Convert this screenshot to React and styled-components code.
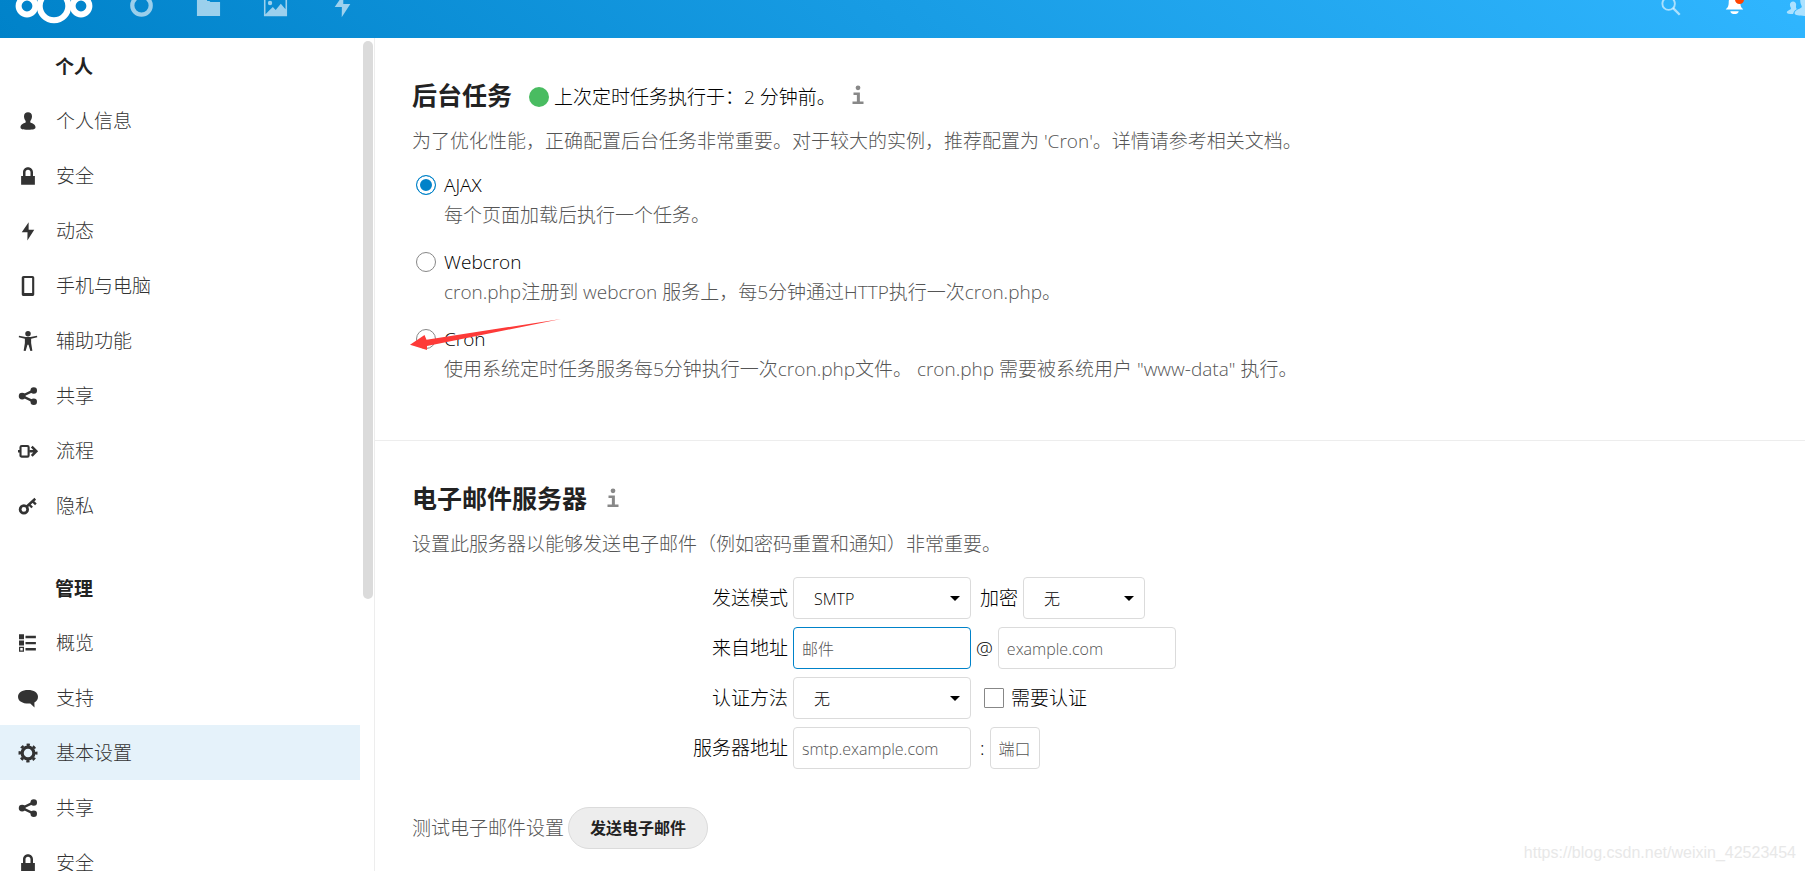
import React from 'react';
import styled, { createGlobalStyle } from 'styled-components';

// icons, all drawn on a 16px grid
const icons = {
  user: (
    <path d="M8 1c-1.9 0-3.2 1.300-3.200 3.200 0 1.600.5 2.600 1.200 3.500.300.500.200 1.400-.200 1.700C4.300 10 2 10.600 2 13c0 1.400 1.500 2 6 2s6-.600 6-2c0-2.400-2.300-3-3.800-3.600-.400-.300-.500-1.200-.200-1.700.700-.900 1.200-1.900 1.200-3.500C11.200 2.300 9.900 1 8 1z" />
  ),
  lock: (
    <path d="M8 1C5.700 1 4 2.700 4 5v3H2.500v7h11V8H12V5c0-2.300-1.700-4-4-4zm0 2c1.200 0 2 .900 2 2v3H6V5c0-1.100.800-2 2-2z" />
  ),
  bolt: <path d="M8.500 1 3 9h4.600l-.100 6.500L13 7H8.500z" />,
  phone: (
    <path
      fillRule="evenodd"
      d="M4.500 0h7C12.400 0 13 .600 13 1.500v13c0 .900-.600 1.500-1.500 1.500h-7C3.600 16 3 15.400 3 14.500v-13C3 .600 3.600 0 4.500 0zM5 1.600v12h6.300v-12z"
    />
  ),
  access: (
    <>
      <circle cx="8" cy="2.200" r="2.200" />
      <path d="M.800 3.800 6 4.800h4l5.200-1 .200 1.100-4.900 1.300V9.500l1 6.300-1.600.200-1.500-5h-.800l-1.500 5-1.600-.200 1-6.300V6.200L.600 4.900z" />
    </>
  ),
  share: (
    <>
      <circle cx="3.300" cy="8" r="2.700" />
      <circle cx="12.600" cy="3.500" r="2.600" />
      <circle cx="12.600" cy="12.500" r="2.600" />
      <path d="M12.600 3.500 3.300 8l9.300 4.500" fill="none" stroke="currentColor" strokeWidth="1.900" />
    </>
  ),
  flow: (
    <>
      <rect x="2" y="4" width="6.500" height="8.500" rx="1" fill="none" stroke="currentColor" strokeWidth="1.700" />
      <path d="M0 8.200h2M9 8.200h5M11 4.500l3.700 3.700-3.700 3.700" fill="none" stroke="currentColor" strokeWidth="2" />
    </>
  ),
  key: (
    <>
      <circle cx="4.700" cy="10.700" r="3" fill="none" stroke="currentColor" strokeWidth="2.200" />
      <path d="M6.800 8.600 13.800 2.200M9.300 7.200l2 2M12 4.500l2.300 2.200" fill="none" stroke="currentColor" strokeWidth="1.900" />
    </>
  ),
  list: (
    <>
      <path d="M.800 1h4v4h-4zM.800 6h4v4h-4zM6 2.200h8.300v1.900H6zM6 7.100h8.300V9H6zM6 12h8.300v1.900H6z" />
      <rect x="1.300" y="11.500" width="3" height="3" fill="none" stroke="currentColor" />
    </>
  ),
  comment: (
    <path d="M8 1.500c4.600 0 8 2 8 5.500 0 2.300-1.200 3.700-2.900 4.600L13.200 15.500 9.800 12.400C4.500 12.800 0 11 0 7c0-3.500 3.400-5.500 8-5.500z" />
  ),
  gear: (
    <>
      <circle cx="8" cy="8" r="4.700" fill="none" stroke="currentColor" strokeWidth="2.600" />
      <circle cx="8" cy="8" r="6.600" fill="none" stroke="currentColor" strokeWidth="2" strokeDasharray="2.600 2.580" strokeDashoffset="1.300" />
    </>
  ),
  ring: <circle cx="8" cy="8" r="5.900" fill="none" stroke="currentColor" strokeWidth="2.700" />,
  folder: <path d="M.600 1.500h6.500v3.600h1.500l.600.600h6.200v9H.600z" />,
  picture: (
    <path
      fillRule="evenodd"
      d="M.600 1h14.800v13.800H.600zM1.600 2v11.600l3-3 1.700-1.600 1.800 1.800 3.300-4 3 3.600V2zM4.500 5a1.400 1.400 0 1 1 0 2.800 1.400 1.400 0 0 1 0-2.800z"
    />
  ),
  search: (
    <>
      <circle cx="6.800" cy="6.800" r="4" fill="none" stroke="currentColor" strokeWidth="1.200" />
      <path d="m9.700 9.700 4.200 4.200" fill="none" stroke="currentColor" strokeWidth="1.500" />
    </>
  ),
  bell: (
    <>
      <path d="M8 1.500c-2.500 0-3.700 2-3.700 4.300 0 2.500-.500 3.400-1.900 4.700h11.200c-1.400-1.300-1.900-2.200-1.900-4.700C11.700 3.500 10.500 1.500 8 1.500z" />
      <path d="M5.300 11.600h5.400C10.400 13 9.300 13.500 8 13.500s-2.400-.500-2.700-1.900z" />
    </>
  ),
  contacts: (
    <>
      <path d="M12 2c-1.700 0-2.900 1.200-2.900 2.900 0 2.200 1 2.800 1 3.900S5.500 10.700 5.500 13c0 1.200 3 1.700 6.500 1.700s6.500-.500 6.500-1.700c0-2.300-4.600-3.100-4.600-4.200s1-1.700 1-3.900C14.900 3.200 13.700 2 12 2z" />
      <path d="M4.500 5.500c-1.200 0-2 .900-2 2 0 1.300.700 1.700.700 2.500 0 .600-2.700 1.200-2.700 2.400 0 .700 1.500 1 4 1 .500-2 1.800-2.700 2.500-3.200-.700-.300-.700-1.300-.500-2.700 0-1.100-.800-2-2-2z" />
    </>
  ),
  info: (
    <>
      <circle cx="8" cy="2.200" r="1.900" />
      <path d="M4.400 5.900h5.100v7.200h2.900v2H3.600v-2h3.500V7.900H4.400z" />
    </>
  ),
};

const Icon = ({ name, size = 20 }) => (
  <svg width={size} height={size} viewBox="0 0 16 16" fill="currentColor" overflow="visible" aria-hidden="true">
    {icons[name]}
  </svg>
);

const personal = [
  { icon: 'user', label: '个人信息' },
  { icon: 'lock', label: '安全' },
  { icon: 'bolt', label: '动态' },
  { icon: 'phone', label: '手机与电脑' },
  { icon: 'access', label: '辅助功能' },
  { icon: 'share', label: '共享' },
  { icon: 'flow', label: '流程' },
  { icon: 'key', label: '隐私' },
];

const admin = [
  { icon: 'list', label: '概览' },
  { icon: 'comment', label: '支持' },
  { icon: 'gear', label: '基本设置', active: true },
  { icon: 'share', label: '共享' },
  { icon: 'lock', label: '安全' },
];

const modes = [
  { id: 'ajax', label: 'AJAX', text: '每个页面加载后执行一个任务。' },
  {
    id: 'webcron',
    label: 'Webcron',
    text: 'cron.php注册到 webcron 服务上，每5分钟通过HTTP执行一次cron.php。',
  },
  {
    id: 'cron',
    label: 'Cron',
    text: '使用系统定时任务服务每5分钟执行一次cron.php文件。 cron.php 需要被系统用户 "www-data" 执行。',
    marked: true,
  },
];

const NavGroup = ({ title, items }) => (
  <Group>
    <GroupTitle>{title}</GroupTitle>
    <ul>
      {items.map(({ icon, label, active }) => (
        <li key={label}>
          <NavLink href="#" $active={active}>
            <Icon name={icon} />
            <span>{label}</span>
          </NavLink>
        </li>
      ))}
    </ul>
  </Group>
);

const App = () => {
  return (
    <Page>
      <GlobalStyle />
      {/* header */}
      <Header>
        <Logo href="#" aria-label="Nextcloud">
          <svg width="78" height="36" viewBox="0 0 78 36" fill="none" stroke="#fff" strokeWidth="6">
            <circle cx="12" cy="18" r="8.400" />
            <circle cx="39" cy="18" r="14.300" />
            <circle cx="66" cy="18" r="8.400" />
          </svg>
        </Logo>
        <AppMenu>
          {['ring', 'folder', 'picture', 'bolt'].map((name) => (
            <HeaderLink key={name} href="#" aria-label={name}>
              <Icon name={name} size={25} />
            </HeaderLink>
          ))}
        </AppMenu>
        <UserMenu>
          <HeaderLink href="#" aria-label="search">
            <Icon name="search" size={25} />
          </HeaderLink>
          <HeaderLink href="#" aria-label="notifications" $bright>
            <Icon name="bell" size={25} />
            <Unread />
          </HeaderLink>
          <HeaderLink href="#" aria-label="contacts">
            <Icon name="contacts" size={25} />
          </HeaderLink>
        </UserMenu>
      </Header>

      <Body>
        {/* sidebar */}
        <Sidebar>
          <nav>
            <NavGroup title="个人" items={personal} />
            <NavGroup title="管理" items={admin} />
          </nav>
          <Scrollbar />
        </Sidebar>

        <Content>
          {/* background jobs */}
          <Section>
            <Heading>
              <h2>后台任务</h2>
              <Status>
                <Dot />
                上次定时任务执行于：2 分钟前。
              </Status>
              <InfoLink href="#" aria-label="info">
                <Icon name="info" />
              </InfoLink>
            </Heading>
            <Hint>
              为了优化性能，正确配置后台任务非常重要。对于较大的实例，推荐配置为 'Cron'。详情请参考相关文档。
            </Hint>
            <Options>
              {modes.map(({ id, label, text, marked }) => (
                <Option key={id}>
                  <input type="radio" name="mode" id={id} defaultChecked={id === 'ajax'} />
                  <label htmlFor={id}>{label}</label>
                  <p>{text}</p>
                  {marked && (
                    <Arrow width="151" height="31" viewBox="0 0 151 31" aria-hidden="true">
                      <path d="M0 25.700 14.500 16l2 4.700L151 0 17 27l0 4z" fill="#fd3a38" />
                    </Arrow>
                  )}
                </Option>
              ))}
            </Options>
          </Section>

          {/* mail server */}
          <Section>
            <Heading>
              <h2>电子邮件服务器</h2>
              <InfoLink href="#" aria-label="info">
                <Icon name="info" />
              </InfoLink>
            </Heading>
            <Hint>设置此服务器以能够发送电子邮件（例如密码重置和通知）非常重要。</Hint>
            <Form onSubmit={(e) => e.preventDefault()}>
              <Row>
                <RowLabel htmlFor="smtpmode">发送模式</RowLabel>
                <Select id="smtpmode" defaultValue="smtp">
                  <option value="smtp">SMTP</option>
                </Select>
                <Extra>
                  <label htmlFor="secure">加密</label>
                  <Select id="secure" $width={122}>
                    <option>无</option>
                  </Select>
                </Extra>
              </Row>
              <Row>
                <RowLabel htmlFor="from">来自地址</RowLabel>
                <TextInput id="from" type="text" placeholder="邮件" $active />
                <label htmlFor="domain">@</label>
                <TextInput id="domain" type="text" placeholder="example.com" />
              </Row>
              <Row>
                <RowLabel htmlFor="authtype">认证方法</RowLabel>
                <Select id="authtype">
                  <option>无</option>
                </Select>
                <Extra>
                  <Checkbox id="auth" type="checkbox" />
                  <label htmlFor="auth">需要认证</label>
                </Extra>
              </Row>
              <Row>
                <RowLabel htmlFor="host">服务器地址</RowLabel>
                <TextInput id="host" type="text" placeholder="smtp.example.com" />
                <Extra>
                  <label htmlFor="port">:</label>
                  <TextInput id="port" type="text" placeholder="端口" $width={50} />
                </Extra>
              </Row>
            </Form>
            <TestRow>
              <span>测试电子邮件设置</span>
              <Button type="button">发送电子邮件</Button>
            </TestRow>
          </Section>
        </Content>
      </Body>
      <Watermark>https://blog.csdn.net/weixin_42523454</Watermark>
    </Page>
  );
};

const GlobalStyle = createGlobalStyle`
  * {
    box-sizing: border-box;
    margin: 0;
    padding: 0;
  }
  body {
    background: #fff;
    color: #000;
    font-family: 'Open Sans', 'Noto Sans CJK SC', sans-serif;
    font-size: 19px;
    font-weight: 300;
    line-height: 30px;
  }
  ul {
    list-style: none;
  }
  a {
    color: inherit;
    text-decoration: none;
  }
  svg {
    display: block;
    flex-shrink: 0;
  }
`;

const Page = styled.div`
  position: relative;
  display: flex;
  flex-direction: column;
  height: 100vh;
  overflow: hidden;
`;

const Header = styled.header`
  display: flex;
  align-items: flex-end;
  flex-shrink: 0;
  height: 38px;
  padding: 0 0 20px 15px;
  overflow: hidden;
  background: linear-gradient(40deg, #0082c9 0%, #30b6ff 100%);
`;

const Logo = styled.a`
  margin-bottom: -6px;
`;

const AppMenu = styled.nav`
  display: flex;
  gap: 42px;
  margin-left: 36px;
`;

const UserMenu = styled.div`
  display: flex;
  gap: 39px;
  margin-left: auto;
  margin-right: -6px;
`;

const HeaderLink = styled.a`
  position: relative;
  color: ${({ $bright }) => ($bright ? '#fff' : 'rgba(255, 255, 255, 0.6)')};
`;

const Unread = styled.span`
  position: absolute;
  top: 2px;
  right: 3px;
  width: 9px;
  height: 9px;
  border-radius: 50%;
  background: #ff4402;
`;

const Body = styled.div`
  display: flex;
  flex: 1;
  min-height: 0;
`;

const Sidebar = styled.aside`
  display: flex;
  flex-shrink: 0;
  width: 375px;
  border-right: 1px solid #ededed;
  overflow: hidden;
  nav {
    flex: 1;
  }
`;

const Scrollbar = styled.div`
  width: 10px;
  height: 67%;
  margin: 3px 1px 0 3px;
  border-radius: 5px;
  background: #dbdbdb;
`;

const Group = styled.div`
  margin-bottom: 27px;
`;

const GroupTitle = styled.h3`
  padding: 4px 0 0 55px;
  color: #222;
  font-size: 19px;
  font-weight: 700;
  line-height: 51px;
`;

const NavLink = styled.a`
  display: flex;
  align-items: center;
  gap: 18px;
  height: 55px;
  padding-left: 18px;
  color: #333;
  background: ${({ $active }) => ($active ? '#e5f2fa' : 'transparent')};
  span {
    color: #333;
  }
`;

const Content = styled.main`
  flex: 1;
  min-width: 0;
  overflow: hidden;
`;

const Section = styled.section`
  padding: 37px 37px 56px;
  border-bottom: 1px solid #ededed;
`;

const Heading = styled.div`
  display: flex;
  align-items: center;
  height: 40px;
  margin-bottom: 11px;
  h2 {
    color: #222;
    font-size: 25px;
    font-weight: 700;
  }
`;

const Status = styled.span`
  display: flex;
  align-items: center;
  gap: 5px;
  margin: 4px -4px 0 17px;
`;

const Dot = styled.span`
  width: 20px;
  height: 20px;
  border-radius: 50%;
  background: #49bc61;
`;

const InfoLink = styled.a`
  margin-left: 16px;
  color: #888;
`;

const Hint = styled.p`
  color: #555;
`;

const Options = styled.div`
  display: grid;
  gap: 17px;
  margin-top: 14px;
`;

const Option = styled.div`
  position: relative;
  display: grid;
  grid-template-columns: 20px 1fr;
  align-items: center;
  column-gap: 8px;
  padding-left: 4px;
  input {
    appearance: none;
    width: 20px;
    height: 20px;
    border: 1px solid #878787;
    border-radius: 50%;
  }
  input:checked {
    border-color: #0082c9;
    background: #0082c9;
    box-shadow: inset 0 0 0 3px #fff;
  }
  p {
    grid-column: 2;
    color: #555;
  }
`;

const Arrow = styled.svg`
  position: absolute;
  top: -5px;
  left: -2px;
`;

const Form = styled.form`
  display: grid;
  gap: 8px;
  margin-top: 18px;
`;

const Row = styled.div`
  display: flex;
  align-items: center;
  gap: 5px;
`;

const RowLabel = styled.label`
  width: 376px;
  text-align: right;
`;

const Extra = styled.div`
  display: flex;
  align-items: center;
  gap: 5px;
  padding-left: 4px;
`;

const TextInput = styled.input`
  width: ${({ $width = 178 }) => $width}px;
  height: 42px;
  padding: 2px 8px 0;
  border: 1px solid ${({ $active }) => ($active ? '#0082c9' : '#dbdbdb')};
  border-radius: 4px;
  color: #000;
  font: inherit;
  font-size: 16px;
  &::placeholder {
    color: #555;
  }
`;

const Select = styled.select`
  appearance: none;
  width: ${({ $width = 178 }) => $width}px;
  height: 42px;
  padding: 2px 20px 0;
  border: 1px solid #dbdbdb;
  border-radius: 4px;
  color: #000;
  font: inherit;
  font-size: 16px;
  background: #fff
    url("data:image/svg+xml,%3Csvg xmlns='http://www.w3.org/2000/svg' width='10' height='5'%3E%3Cpath d='M0 0h10L5 5z'/%3E%3C/svg%3E")
    no-repeat right 10px center;
`;

const Checkbox = styled.input`
  appearance: none;
  width: 20px;
  height: 20px;
  margin: 0 2px 0 4px;
  border: 1px solid #878787;
  border-radius: 1px;
`;

const TestRow = styled.div`
  display: flex;
  align-items: center;
  gap: 4px;
  margin-top: 38px;
  color: #555;
`;

const Button = styled.button`
  height: 42px;
  padding: 0 21px;
  border: 1px solid #dbdbdb;
  border-radius: 21px;
  background: #ededed;
  color: #222;
  font: inherit;
  font-size: 16px;
  font-weight: 700;
`;

const Watermark = styled.div`
  position: absolute;
  right: 9px;
  bottom: 3px;
  color: #e8e8e8;
  font-family: 'Liberation Sans', sans-serif;
  font-size: 16px;
  font-weight: 400;
`;

export default App;
